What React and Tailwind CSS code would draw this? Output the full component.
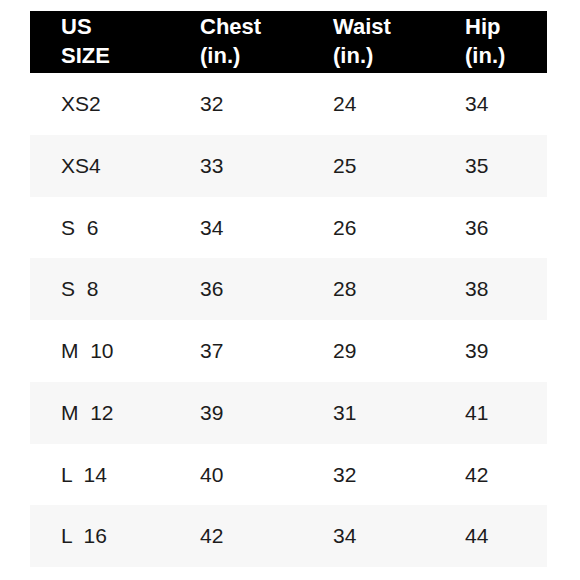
const ROWS = [
  ['XS2', '32', '24', '34'],
  ['XS4', '33', '25', '35'],
  ['S  6', '34', '26', '36'],
  ['S  8', '36', '28', '38'],
  ['M  10', '37', '29', '39'],
  ['M  12', '39', '31', '41'],
  ['L  14', '40', '32', '42'],
  ['L  16', '42', '34', '44'],
];

const HEAD = [
  ['US', 'SIZE'],
  ['Chest', '(in.)'],
  ['Waist', '(in.)'],
  ['Hip', '(in.)'],
];

const COLS = 'grid grid-cols-[139px_133px_132px_113px]';

export default function App() {
  return (
    <div className="w-[580px] h-[580px] bg-white pt-[11px] pl-[30px] font-['Liberation_Sans',Arial,sans-serif]">
      <div className="w-[517px]">
        <div className={`${COLS} bg-black text-white h-[62px] pt-[1px]`}>
          {HEAD.map(([a, b]) => (
            <div key={a} className="pl-[31px] text-[22px] leading-[29px] font-bold">
              <div>{a}</div>
              <div>{b}</div>
            </div>
          ))}
        </div>
        {ROWS.map((row, i) => (
          <div key={row[0]} className={`${COLS} h-[61.75px] items-center text-[21px] text-[#1c1c1c] ${i % 2 ? 'bg-[#f7f7f7]' : 'bg-white'}`}>
            {row.map((c, j) => (
              <div key={j} className="pl-[31px] whitespace-pre">{c}</div>
            ))}
          </div>
        ))}
      </div>
    </div>
  );
}
